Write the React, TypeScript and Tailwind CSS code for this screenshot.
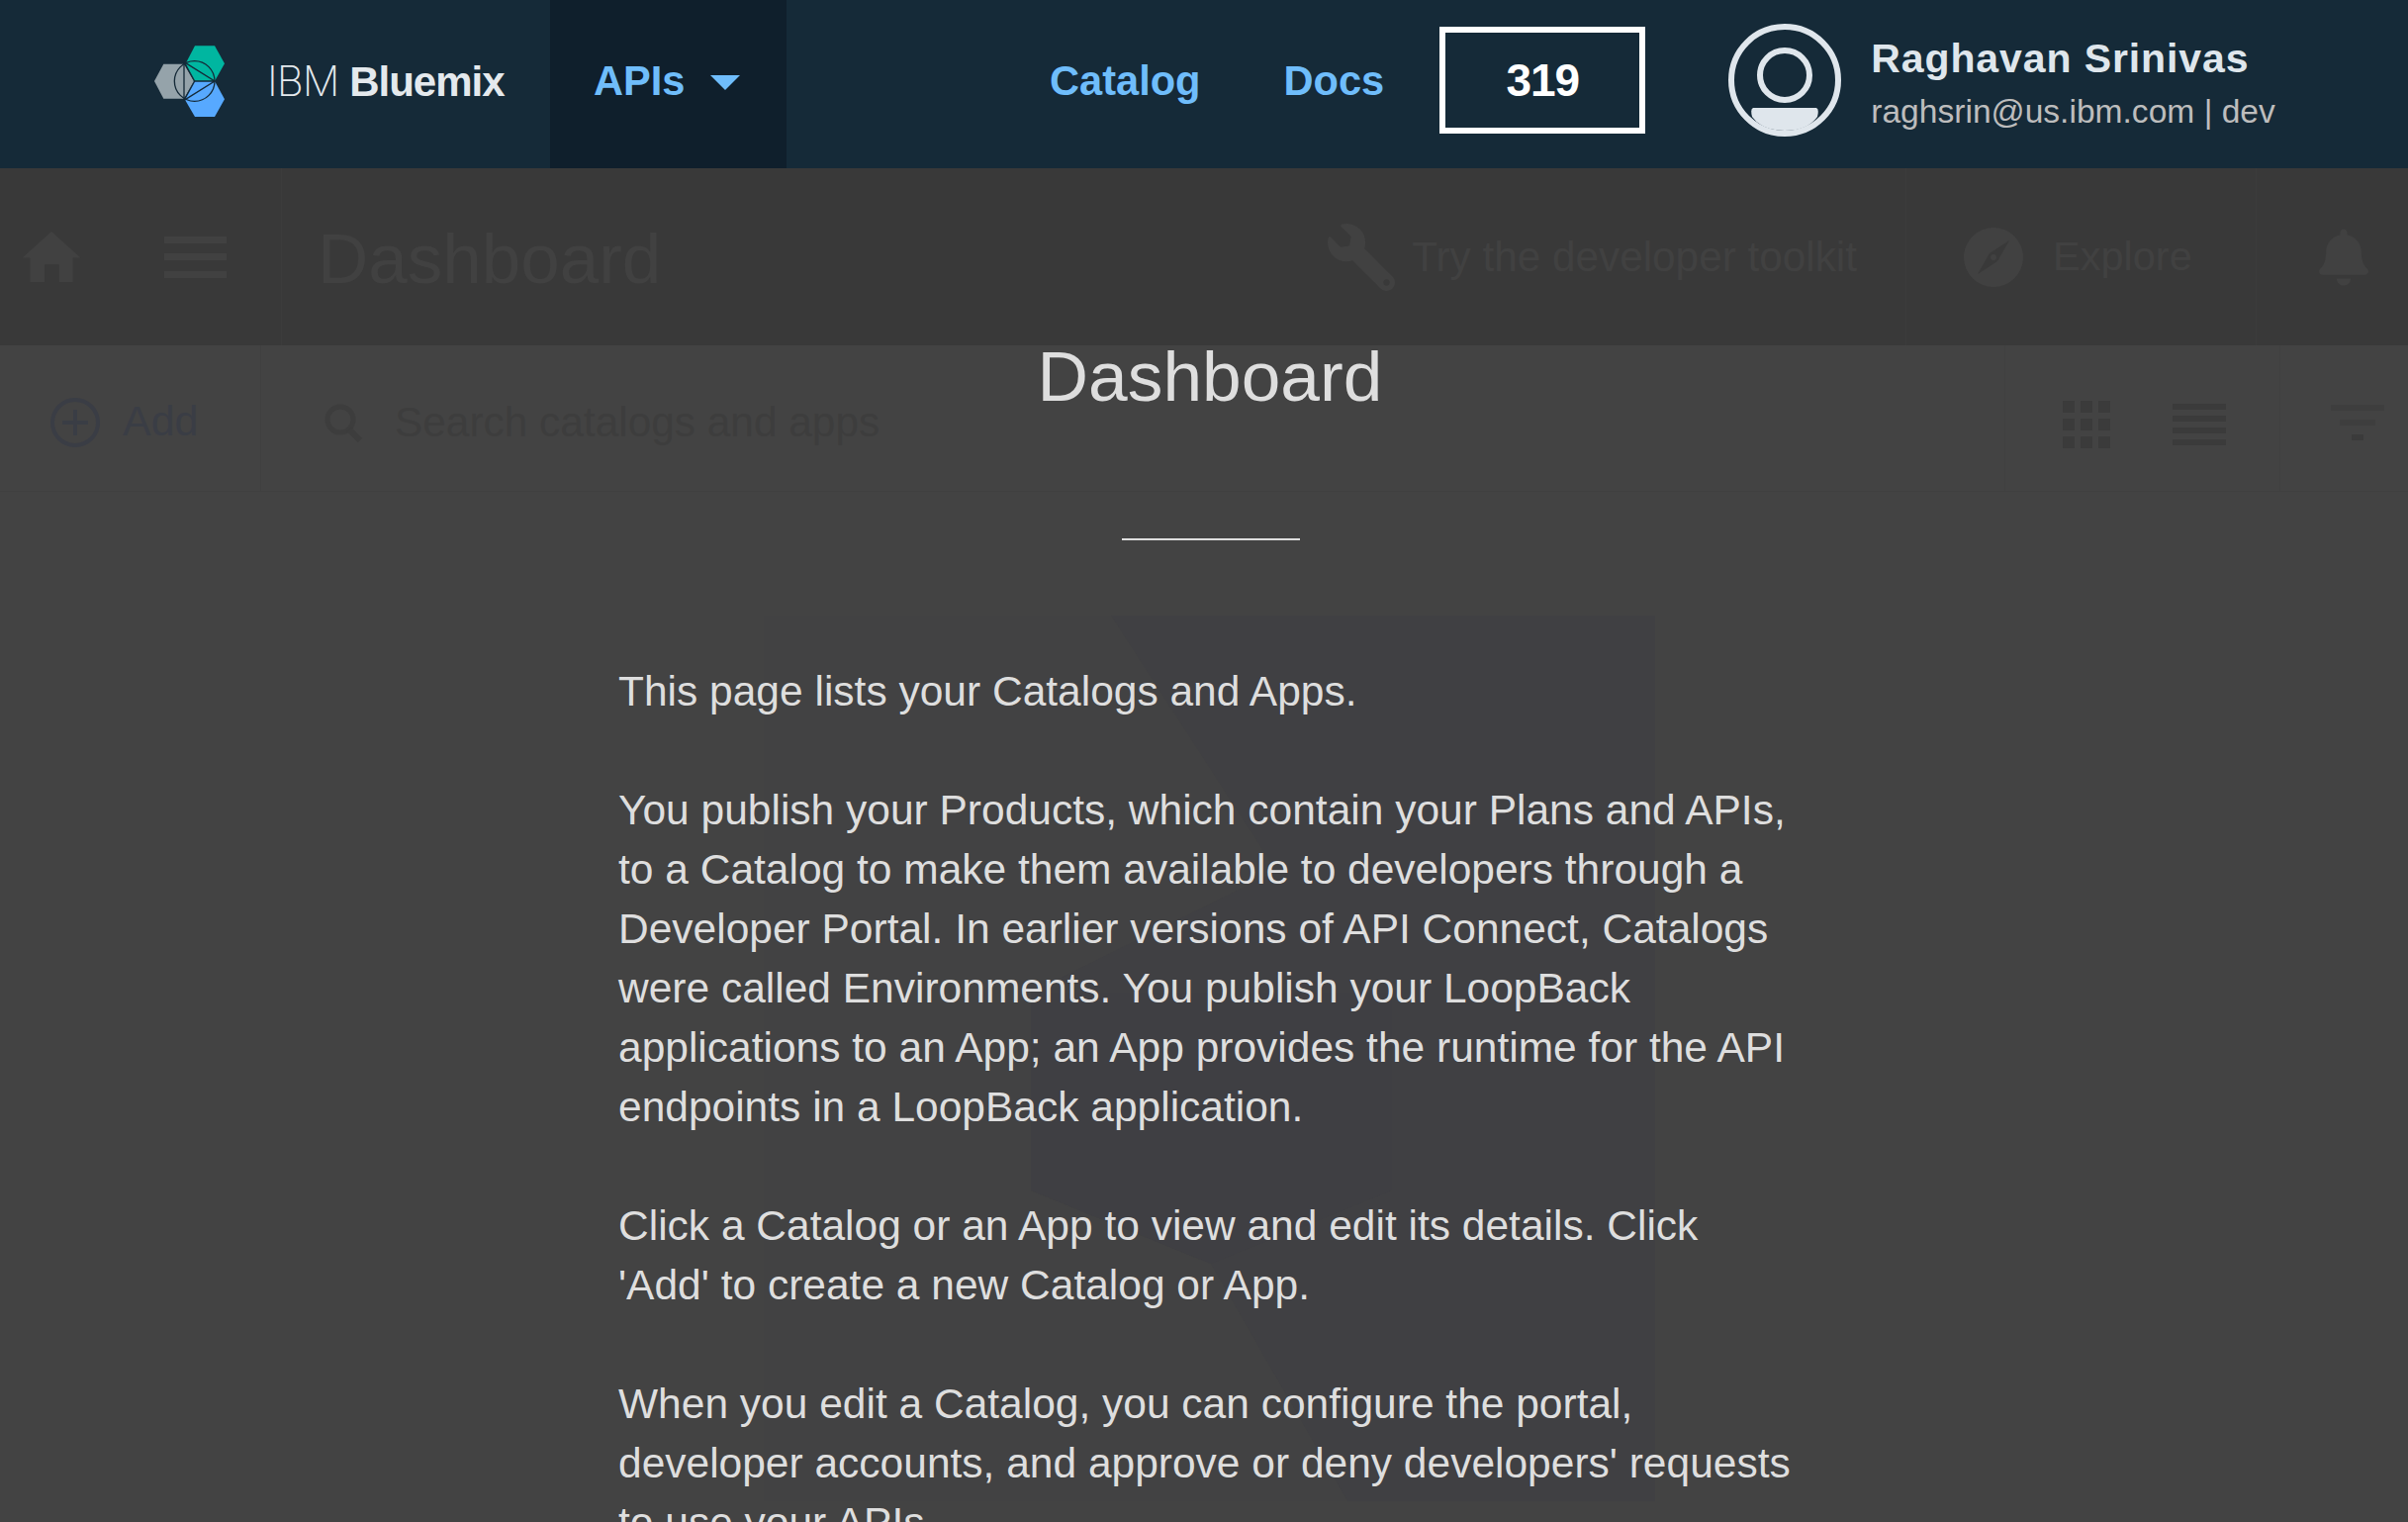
import React from 'react';
import { FaWrench, FaBell } from 'react-icons/fa';

const sans = { fontFamily: '"Liberation Sans", Arial, sans-serif' };

const Logo = () => (
  <svg viewBox="0 0 330 300" className="w-[110px] h-[100px] shrink-0">
    <polygon points="45,150 73,98 135,98 165,150 135,203 73,203" fill="#95a3aa" />
    <polygon points="168,43 228,43 258,97 228,150 165,150 140,97" fill="#00b6a0" />
    <polygon points="165,150 228,150 258,205 228,258 168,258 137,205" fill="#57a9ff" />
    <g stroke="#152a38" strokeWidth="4" fill="none">
      <circle cx="167" cy="150" r="61" />
      <path d="M135 92L167 150L135 208Z" />
      <path d="M135 92L228 150L135 208M167 150H228" />
    </g>
  </svg>
);

const Avatar = () => (
  <svg viewBox="0 0 114 114" className="w-[114px] h-[114px] shrink-0">
    <circle cx="57" cy="57" r="54" fill="none" stroke="#dfe6ec" strokeWidth="6" />
    <circle cx="57" cy="52" r="25" fill="none" stroke="#dfe6ec" strokeWidth="6" />
    <path d="M25 85H89Q92 86 90 94Q80 108 57 108Q34 108 24 94Q22 86 25 85Z" fill="#dfe6ec" />
  </svg>
);

const Home = () => (
  <svg viewBox="0 0 60 52" className="w-[60px] h-[51px] shrink-0" fill="#414141">
    <path d="M30 0L60 27H52V52H38V34H23V52H8V27H0Z" />
  </svg>
);

const Hamburger = () => (
  <div className="flex flex-col justify-between w-[63px] h-[42px] shrink-0">
    <div className="h-[7px] bg-[#414141]" />
    <div className="h-[7px] bg-[#414141]" />
    <div className="h-[7px] bg-[#414141]" />
  </div>
);

const Compass = () => (
  <svg viewBox="0 0 60 60" className="w-[60px] h-[60px] shrink-0">
    <circle cx="30" cy="30" r="30" fill="#414141" />
    <path d="M46 13L34 34L26 26Z" fill="#393939" />
    <path d="M14 47L26 26L34 34Z" fill="#393939" />
    <circle cx="30" cy="30" r="3" fill="#414141" />
  </svg>
);

const AddIcon = () => (
  <svg viewBox="0 0 50 50" className="w-[50px] h-[50px] shrink-0" fill="none" stroke="#3a3d45" strokeWidth="4">
    <circle cx="25" cy="25" r="23" />
    <path d="M25 12V38M12 25H38" />
  </svg>
);

const SearchIcon = () => (
  <svg viewBox="0 0 40 40" className="w-[40px] h-[40px] shrink-0" fill="none" stroke="#3d3d3d" strokeWidth="5">
    <circle cx="17" cy="17" r="13" />
    <path d="M26 27L37 38" strokeWidth="6" />
  </svg>
);

const GridIcon = () => (
  <div className="grid grid-cols-3 gap-[6px] w-[48px] shrink-0">
    {Array.from({ length: 9 }).map((_, i) => (
      <div key={i} className="h-[12px] bg-[#3b3b3b]" />
    ))}
  </div>
);

const ListIcon = () => (
  <div className="flex flex-col gap-[6px] w-[54px] shrink-0">
    {[0, 1, 2, 3].map((i) => (
      <div key={i} className="h-[6px] bg-[#3b3b3b]" />
    ))}
  </div>
);

const FilterIcon = () => (
  <div className="flex flex-col items-center gap-[9px] w-[54px] shrink-0">
    <div className="h-[6px] w-[54px] bg-[#3e3e3e]" />
    <div className="h-[6px] w-[36px] bg-[#3e3e3e]" />
    <div className="h-[6px] w-[12px] bg-[#3b3b3b]" />
  </div>
);

const NavBar = () => (
  <nav className="flex h-[170px] pb-[6px] bg-[#152a38] text-[41.6px] font-bold text-[#6fbdfb]">
    <div className="flex items-center w-[556px] pl-[141px]">
      <Logo />
      <span className="ml-[19px] text-[42px] tracking-[-1px] text-[#e4e9ed] whitespace-nowrap">
        <span className="font-extralight" style={{ fontFamily: 'Inter, sans-serif' }}>IBM</span> Bluemix
      </span>
    </div>
    <div className="flex items-center w-[239px] -mb-[6px] pb-[6px] pl-[44px] bg-[#0f1f2c]">
      <span>APIs</span>
      <span className="ml-[26px] mt-[2px] w-0 h-0 border-x-[15px] border-x-transparent border-t-[15px] border-t-[#6fbdfb]" />
    </div>
    <div className="flex items-center ml-[266px]">
      <span>Catalog</span>
      <span className="ml-[84px]">Docs</span>
      <div className="flex items-center justify-center ml-[56px] -mt-[2px] w-[208px] h-[108px] border-[6px] border-white text-white text-[46px] tracking-[-1px]">
        319
      </div>
      <div className="ml-[84px] -mt-[2px]">
        <Avatar />
      </div>
      <div className="ml-[30px] pt-[4px] flex flex-col">
        <span className="text-[41px] leading-[58px] tracking-[0.9px] text-[#dfe6ec] whitespace-nowrap">Raghavan Srinivas</span>
        <span className="text-[33.6px] leading-[50px] font-normal text-[#bdbdbd] whitespace-nowrap">raghsrin@us.ibm.com | dev</span>
      </div>
    </div>
  </nav>
);

const TitleBar = () => (
  <div className="flex items-stretch h-[179px] bg-[#393939] text-[#414141]">
    <div className="flex items-center w-[285px] pl-[22px] gap-[84px] border-r border-[#3c3c3c]">
      <Home />
      <Hamburger />
    </div>
    <div className="flex items-center flex-1 pl-[36px] pt-[5px] text-[71px]">Dashboard</div>
    <div className="flex items-center pr-[49px] text-[42.3px]">
      <FaWrench className="w-[68px] h-[68px] -scale-x-100 mr-[17px]" />
      Try the developer toolkit
    </div>
    <div className="flex items-center w-[355px] pl-[58px] text-[41.5px] border-x border-[#3c3c3c]">
      <Compass />
      <span className="ml-[30px]">Explore</span>
    </div>
    <div className="flex items-center w-[153px] pl-[63px]">
      <FaBell className="w-[50px] h-[58px]" />
    </div>
  </div>
);

const ToolBar = () => (
  <div className="flex items-stretch h-[148px] bg-[#434343] text-[#3d3d3d] border-b border-[#404040]">
    <div className="flex items-center w-[264px] pt-[9px] pl-[51px] border-r border-[#404040]">
      <AddIcon />
      <span className="ml-[23px] text-[43px] text-[#3a3d45] -mt-[4px]">Add</span>
    </div>
    <div className="flex items-center flex-1 pt-[9px] pl-[63px]">
      <SearchIcon />
      <span className="ml-[32px] text-[42.4px]">Search catalogs and apps</span>
    </div>
    <div className="flex items-center w-[279px] pt-[12px] pl-[58px] gap-[63px] border-x border-[#404040]">
      <GridIcon />
      <ListIcon />
    </div>
    <div className="flex items-center pt-[9px] pl-[51px] w-[129px]">
      <FilterIcon />
    </div>
  </div>
);

// faint shield watermark behind the help text
const Watermark = () => (
  <svg viewBox="0 0 901 895" className="absolute left-[772px] top-[622px] w-[901px] h-[895px]">
    <rect width="901" height="895" fill="#424243" />
    <polygon
      points="351,0 901,0 901,895 590,895 452,655 270,581 270,381 518,258"
      fill="#404043"
    />
    <polygon points="270,381 635,381 635,581 452,655 270,581" fill="#3f3f43" />
  </svg>
);

const HelpOverlay = () => (
  <div className="absolute inset-x-0 top-[339px] flex flex-col items-center text-[#dedede]">
    <h1 className="ml-[12px] text-[71.3px] leading-[82px] font-normal">Dashboard</h1>
    <div className="ml-[13px] mt-[123px] w-[180px] h-[2px] bg-[#dedede]" />
    <div className="mt-[123px] w-[1190px] self-start ml-[625px] text-[42.5px] leading-[60px] whitespace-nowrap flex flex-col gap-[60px]">
      <p>This page lists your Catalogs and Apps.</p>
      <p>
        You publish your Products, which contain your Plans and APIs,<br />
        to a Catalog to make them available to developers through a<br />
        Developer Portal. In earlier versions of API Connect, Catalogs<br />
        were called Environments. You publish your LoopBack<br />
        applications to an App; an App provides the runtime for the API<br />
        endpoints in a LoopBack application.
      </p>
      <p>
        Click a Catalog or an App to view and edit its details. Click<br />
        'Add' to create a new Catalog or App.
      </p>
      <p>
        When you edit a Catalog, you can configure the portal,<br />
        developer accounts, and approve or deny developers' requests<br />
        to use your APIs.
      </p>
    </div>
  </div>
);

export default function App() {
  return (
    <div className="relative h-[1538px] overflow-hidden bg-[#434343]" style={sans}>
      <NavBar />
      <TitleBar />
      <ToolBar />
      <Watermark />
      <HelpOverlay />
    </div>
  );
}
